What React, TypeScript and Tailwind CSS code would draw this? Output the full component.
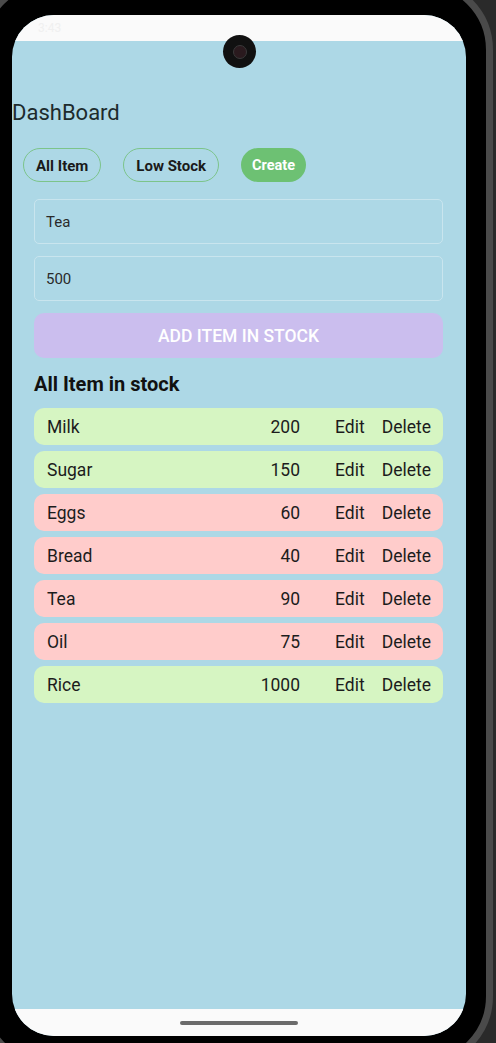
import React from "react";

const items: { name: string; qty: number; low: boolean }[] = [
  { name: "Milk", qty: 200, low: false },
  { name: "Sugar", qty: 150, low: false },
  { name: "Eggs", qty: 60, low: true },
  { name: "Bread", qty: 40, low: true },
  { name: "Tea", qty: 90, low: true },
  { name: "Oil", qty: 75, low: true },
  { name: "Rice", qty: 1000, low: false },
];

export default function App() {
  return (
    <div className="w-[496px] h-[1043px] overflow-hidden bg-[#2a2a2a]" style={{ fontFamily: "Roboto, 'Noto Sans', sans-serif" }}>
      <div className="-ml-[22px] -mt-[22px] w-[515px] h-[1090px] rounded-[72px] border-[7px] border-[#4a4a4a] bg-black p-[2px]">
        <div className="w-full h-full rounded-[66px] bg-black pl-[25px] pt-[28px]">
          <div className="relative w-[454px] h-[1021px] rounded-[42px] overflow-hidden flex flex-col bg-[#add8e6]">
            {/* status bar */}
            <div className="h-[26px] bg-[#fafafa] flex items-center px-[26px] text-[12px] text-[#f0f0f0]">
              <span>3:43</span>
            </div>
            {/* camera */}
            <div className="absolute left-[211px] top-[20px] w-[33px] h-[33px] rounded-full bg-[#111] flex items-center justify-center">
              <div className="w-[14px] h-[14px] rounded-full bg-[#2a1a1e] border border-[#3a3a3a]" />
            </div>
            {/* content */}
            <div className="flex-1 flex flex-col">
              <div className="mt-[59px] text-[22px] leading-[26px] text-[#1d2b2d]">DashBoard</div>
              <div className="mt-[22px] ml-[11px] flex gap-[22px]">
                <div className="h-[34px] px-[12px] pt-[2px] rounded-full border border-[#7cc48a] flex items-center text-[15px] font-bold text-[#1a1a1a]">All Item</div>
                <div className="h-[34px] px-[12px] pt-[2px] rounded-full border border-[#7cc48a] flex items-center text-[15px] font-bold text-[#1a1a1a]">Low Stock</div>
                <div className="h-[34px] px-[11px] pt-[2px] rounded-full bg-[#6dc173] flex items-center text-[14.5px] font-bold text-white">Create</div>
              </div>
              <div className="ml-[22px] w-[409px] flex flex-col">
                <div className="mt-[17px] h-[45px] rounded-[5px] border-[1.5px] border-[#c9e5ee] flex items-center px-[11px] pt-[2px] text-[15px] text-[#2a2a2a]">Tea</div>
                <div className="mt-[12px] h-[45px] rounded-[5px] border-[1.5px] border-[#c9e5ee] flex items-center px-[11px] pt-[2px] text-[15px] text-[#2a2a2a]">500</div>
                <div className="mt-[12px] h-[45px] rounded-[10px] bg-[#cbbeee] flex items-center justify-center pt-[2px] text-[17.5px] font-medium text-white">ADD ITEM IN STOCK</div>
                <div className="mt-[14px] text-[20px] leading-[24px] font-bold text-[#111]">All Item in stock</div>
                <div className="mt-[12px] flex flex-col gap-[6px]">
                  {items.map((it) => (
                    <div
                      key={it.name}
                      className={`h-[37px] rounded-[10px] flex items-center pl-[13px] pr-[12px] pt-[1px] text-[17.5px] text-[#1c1c1c] ${it.low ? "bg-[#ffcccb]" : "bg-[#d6f5c2]"}`}
                    >
                      <span className="flex-1">{it.name}</span>
                      <span className="text-right">{it.qty}</span>
                      <span className="ml-[35px]">Edit</span>
                      <span className="ml-[17px]">Delete</span>
                    </div>
                  ))}
                </div>
              </div>
            </div>
            {/* nav bar */}
            <div className="h-[27px] bg-[#fafafa] flex items-center justify-center">
              <div className="w-[118px] h-[4px] rounded-full bg-[#6b6b6b]" />
            </div>
          </div>
        </div>
      </div>
    </div>
  );
}
